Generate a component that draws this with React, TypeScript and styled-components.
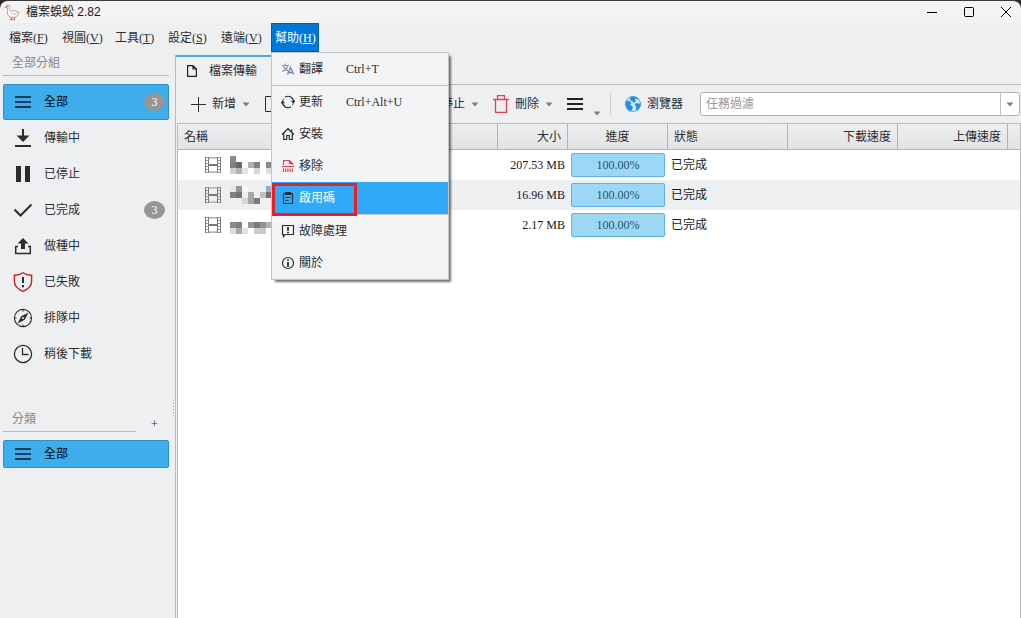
import React from "react";
import styled, { createGlobalStyle, css } from "styled-components";

const ui = '"Liberation Serif", "Noto Sans CJK TC", serif';

const GlobalStyle = createGlobalStyle`
  *, *::before, *::after { box-sizing: border-box; }
  body {
    margin: 0;
    background: #2f2b2c;
    color: #2b2d2f;
    font-family: ${ui};
    font-size: 12px;
    line-height: 16px;
  }
  button, input { font: inherit; color: inherit; }
  button { margin: 0; padding: 0; border: 0; background: none; text-align: left; white-space: nowrap; }
  ul { margin: 0; padding: 0; list-style: none; }
  svg { display: block; flex: none; }
`;

const Window = styled.div`
  display: flex;
  flex-direction: column;
  min-height: 100vh;
`;

const TitleBar = styled.header`
  display: flex;
  align-items: center;
  height: 23px;
  padding-left: 4px;
  border-top: 1px solid #3d393a;
  border-radius: 8px 8px 0 0;
  background: #f3f3f3;
`;

const Title = styled.h1`
  flex: 1;
  margin: 0 0 0 6px;
  font: 400 12px/20px "Liberation Sans", "Noto Sans CJK TC", sans-serif;
  color: #1a1a1a;
`;

const WindowControls = styled.div`
  display: flex;
  gap: 7px;
`;

const WindowButton = styled.button`
  display: flex;
  align-items: center;
  justify-content: center;
  width: 30px;
  height: 22px;
`;

const MenuBar = styled.nav`
  display: flex;
  gap: 5px;
  height: 29px;
  padding-left: 6px;
  background: #eeeff1;
`;

const MenuSlot = styled.div`
  position: relative;
`;

const MenuTitle = styled.button<{ $open?: boolean }>`
  width: 48px;
  height: 29px;
  padding-left: 3px;
  ${(p) =>
    p.$open &&
    css`
      border: 1px solid #005ba8;
      background: #0078d7;
      color: #fff;
    `}
`;

const Menu = styled.ul`
  position: absolute;
  z-index: 10;
  top: 29px;
  left: 0;
  width: 178px;
  border: 1px solid #c2c4c6;
  background: #f3f4f6;
  box-shadow: 3px 3px 2px -1px rgba(0, 0, 0, 0.55);
`;

const MenuRow = styled.li<{ $divided?: boolean }>`
  position: relative;
  ${(p) => p.$divided && "border-bottom: 1px solid #c2c4c6;"}
`;

const MenuItem = styled.button<{ $active?: boolean }>`
  display: flex;
  align-items: center;
  width: 100%;
  height: 32px;
  padding-left: 9px;
  background: ${(p) => (p.$active ? "#2fa9f8" : "transparent")};
`;

const MenuLabel = styled.span<{ $active?: boolean }>`
  min-width: 47px;
  margin-left: 4px;
  color: ${(p) => (p.$active ? "#fff" : "inherit")};
`;

const Marker = styled.span`
  position: absolute;
  top: 1px;
  left: 0;
  width: 85px;
  height: 33px;
  border: 3px solid #ee1c25;
  pointer-events: none;
`;

const Body = styled.div`
  display: flex;
  flex: 1;
  background: #eeeff1;
`;

const Sidebar = styled.aside`
  position: relative;
  flex: none;
  width: 175px;
  padding: 0 6px 0 3px;
`;

const GroupHeader = styled.div`
  display: flex;
  align-items: flex-end;
  margin-bottom: 8px;
`;

const GroupTitle = styled.h2`
  flex: 1;
  height: 24px;
  margin: 0;
  padding-left: 9px;
  border-bottom: 1px solid #b9bbbd;
  font-size: 12px;
  font-weight: 400;
  line-height: 22px;
  color: #85878a;
`;

const AddCategory = styled.button`
  width: 33px;
  height: 16px;
  padding-left: 4px;
  text-align: center;
`;

const GroupList = styled.ul`
  margin-bottom: 36px;
`;

const GroupItem = styled.button<{ $selected?: boolean; $compact?: boolean }>`
  display: flex;
  align-items: center;
  width: 100%;
  height: ${(p) => (p.$compact ? 28 : 36)}px;
  padding: 0 3px 0 9px;
  border: 1px solid ${(p) => (p.$selected ? "#2f8fc4" : "transparent")};
  border-radius: 2px;
  background: ${(p) => (p.$selected ? "#3daeeb" : "transparent")};
  color: ${(p) => (p.$selected ? "#000" : "#2b2d2f")};
`;

const GroupName = styled.span`
  flex: 1;
  margin-left: 11px;
`;

const Badge = styled.span`
  width: 21px;
  height: 18px;
  border-radius: 50%;
  background: #969696;
  color: #fff;
  line-height: 18px;
  text-align: center;
`;

const SplitGrip = styled.span`
  position: absolute;
  top: 348px;
  right: 1px;
  width: 1px;
  height: 16px;
  background: repeating-linear-gradient(#a2a4a6 0 1px, transparent 1px 3px);
`;

const Main = styled.main`
  display: flex;
  flex: 1;
  flex-direction: column;
  min-width: 0;
  margin-top: 3px;
  border-left: 1px solid #b9bbbd;
`;

const TabStrip = styled.div`
  display: flex;
  height: 30px;
  border-bottom: 1px solid #b9bbbd;
`;

const Tab = styled.button`
  display: flex;
  align-items: center;
  gap: 12px;
  height: 30px;
  padding: 0 14px 0 11px;
  border-top: 2px solid #46abdf;
  border-right: 1px solid #b9bbbd;
  background: #eeeff1;
`;

const Toolbar = styled.div`
  display: flex;
  align-items: center;
  height: 38px;
  padding-left: 14px;
`;

const CreateTools = styled.div`
  display: flex;
  align-items: center;
  gap: 14px;
  width: 229px;
`;

const Tool = styled.button`
  display: flex;
  align-items: center;
  gap: 6px;
  margin-right: 14px;
`;

const CreateTool = styled(Tool)`
  margin-right: 0;
`;

const OverflowTool = styled(Tool)`
  gap: 10px;
  height: 24px;
  margin-right: 9px;

  svg:last-child {
    align-self: flex-end;
  }
`;

const ToolDivider = styled.span`
  width: 1px;
  height: 22px;
  margin-right: 14px;
  background: #c9cbcd;
`;

const FilterBox = styled.div`
  display: flex;
  flex: 1;
  height: 24px;
  margin: 0 1px 0 3px;
  border: 1px solid #b3b5b7;
  border-radius: 3px;
  background: #fff;
`;

const FilterInput = styled.input`
  flex: 1;
  min-width: 0;
  padding: 0 5px;
  border: 0;
  outline: 0;
  background: transparent;

  &::placeholder {
    color: #97999b;
    opacity: 1;
  }
`;

const FilterToggle = styled.button`
  display: flex;
  align-items: center;
  justify-content: center;
  width: 19px;
  border-left: 1px solid #c0c2c4;
`;

const TableFrame = styled.section`
  flex: 1;
  margin: 0 0 0 1px;
  border: solid #b9bbbd;
  border-width: 1px 1px 0;
  background: #fff;
`;

const TaskTable = styled.table`
  width: 100%;
  table-layout: fixed;
  border-collapse: separate;
  border-spacing: 0;
`;

type Align = "left" | "center" | "right";

const HeadCell = styled.th<{ $align?: Align }>`
  height: 26px;
  padding: 0 6px;
  border-right: 1px solid #b0b2b4;
  border-bottom: 1px solid #b0b2b4;
  background: linear-gradient(#edeef0, #e1e3e5);
  font-weight: 400;
  text-align: ${(p) => p.$align ?? "left"};

  &:last-child {
    border-right: 0;
    padding: 0;
  }
`;

const TaskRow = styled.tr`
  &:nth-child(even) {
    background: #eeeff1;
  }
`;

const Cell = styled.td<{ $align?: Align }>`
  height: 30px;
  padding: 0 3px;
  color: #17191b;
  text-align: ${(p) => p.$align ?? "left"};
`;

const NameCell = styled.div`
  display: flex;
  align-items: center;
  gap: 9px;
  padding-left: 24px;
`;

const Progress = styled.div`
  height: 24px;
  border: 1px solid #62b3e4;
  border-radius: 2px;
  background: #9cd8f5;
  color: #1c516e;
  line-height: 22px;
  text-align: center;
`;

const Caret = () => (
  <svg width="8" height="5" viewBox="0 0 8 5" aria-hidden="true">
    <path d="M0.5 0.5h7L4 4.5z" fill="#7c7e80" />
  </svg>
);

const Bars = () => (
  <svg width="16" height="14" viewBox="0 0 16 14" aria-hidden="true">
    <path d="M0 2h16M0 7h16M0 12h16" stroke="#202223" strokeWidth="2" />
  </svg>
);

const Icon20 = ({ children }: { children: React.ReactNode }) => (
  <svg width="20" height="20" viewBox="0 0 20 20" fill="none" stroke="#2a2c2d" aria-hidden="true">
    {children}
  </svg>
);

const Icon14 = ({ children, color = "#2a2c2d" }: { children: React.ReactNode; color?: string }) => (
  <svg width="14" height="14" viewBox="0 0 14 14" fill="none" stroke={color} aria-hidden="true">
    {children}
  </svg>
);

const Goose = () => (
  <svg width="16" height="17" viewBox="0 0 16 17" aria-hidden="true">
    <path
      d="M2 2.6C2.200 1.200 3.200.7 4.200.9c1.300.3 1.700 1.500 1.400 2.900-.3 1.600-.2 2.600.9 3.100 1.300.4 3-.5 4.700-.2 1.500.3 2.300 1.300 4 1.600-.3 1.300-1.300 1.700-1.500 2.600-.4 1.600-2.200 2.500-4.400 2.500-3.200 0-5.700-1.200-5.900-3.900C3.300 7.500 3.900 5.800 3.500 4z"
      fill="#fbf6f2"
      stroke="#a8938b"
      strokeWidth=".8"
    />
    <path d="M2.600 2L.2 3.500l2.900.7z" fill="#e07a50" />
    <path d="M7.500 9c1.400 1.600 4 1.500 6-.3" fill="none" stroke="#b7a59d" strokeWidth=".8" />
    <path d="M7.500 13.200l.3 2.600H5.500M10 13.200l.5 2.600H8.600" fill="none" stroke="#d2704c" strokeWidth="1.100" />
    <circle cx="3.900" cy="2.400" r=".5" fill="#333" />
  </svg>
);

const groupIcons = {
  all: (
    <Icon20>
      <path d="M2 5h16M2 10h16M2 15h16" stroke="#1b3b58" strokeWidth="2" />
    </Icon20>
  ),
  transferring: (
    <Icon20>
      <path d="M10 1v9M2 18h16" strokeWidth="2" />
      <path d="M3.500 7.500h13L10 14z" fill="#2a2c2d" stroke="none" />
    </Icon20>
  ),
  stopped: (
    <Icon20>
      <path d="M3 2h5v16H3zM12 2h5v16h-5z" fill="#2a2c2d" stroke="none" />
    </Icon20>
  ),
  done: (
    <Icon20>
      <path d="M1.500 9.500l6 6L18.500 4.500" strokeWidth="2" />
    </Icon20>
  ),
  seeding: (
    <Icon20>
      <path d="M5 10.500H2.700v7h14.600v-7H15" strokeWidth="1.500" />
      <path d="M10 2l5.500 5.500h-3.500V13H8V7.500H4.500z" fill="#2a2c2d" stroke="none" />
    </Icon20>
  ),
  failed: (
    <Icon20>
      <path d="M10 .8c2.500 1.800 5.500 2.500 8.600 2.500v6c0 4.800-3.500 8-8.600 10-5.100-2-8.600-5.200-8.600-10v-6C4.500 3.300 7.500 2.600 10 .8z" stroke="#c81e1e" strokeWidth="1.400" />
      <path d="M10 5v6M10 13v2.200" strokeWidth="2" />
    </Icon20>
  ),
  queued: (
    <Icon20>
      <circle cx="10" cy="10" r="8.600" strokeWidth="1.100" />
      <path d="M10 1.500v2M10 16.500v2M1.500 10h2M16.500 10h2" />
      <path d="M15.500 4.500l-3.800 7.200L4.500 15.500l3.800-7.200z" fill="#2a2c2d" stroke="none" />
      <circle cx="10" cy="10" r="1" fill="#eeeff1" stroke="none" />
    </Icon20>
  ),
  later: (
    <Icon20>
      <circle cx="10" cy="10" r="8.600" strokeWidth="1.300" />
      <path d="M9.500 4v6.500h6" strokeWidth="1.300" />
    </Icon20>
  ),
};

const menuIcons = {
  translate: (
    <Icon14 color="#8a93bd">
      <path d="M1 3.500h7M4.500 1.500v2M2.500 4c.7 2.500 2.500 4 4.500 5M6.700 4C6 6.500 3.500 8.500 1.200 9.500" strokeWidth="1.200" />
      <path d="M6.500 12.500l3-7L12.800 12.500M7.500 10.500h4" stroke="#7480b4" strokeWidth="1.300" />
    </Icon14>
  ),
  update: (
    <Icon14>
      <path d="M4 2.200A5.500 5.500 0 0 1 12.500 7M10 11.700A5.500 5.500 0 0 1 1.500 7" strokeWidth="1.200" />
      <path d="M1.600 7A5.500 5.500 0 0 1 2.800 3.600M12.400 7a5.500 5.500 0 0 1-1.200 3.400" strokeWidth="1.200" opacity=".6" />
      <path d="M10.500 5.800l2 1.900 1.300-2.300M3.500 8.200l-2-1.900L.2 8.600" strokeWidth="1.100" />
    </Icon14>
  ),
  install: (
    <Icon14>
      <path d="M1 7.500L7 1.700l6 5.800M2.700 6.500v6h3v-4h2.600v4h3v-6M10.700 5V2.500" strokeWidth="1.200" />
    </Icon14>
  ),
  remove: (
    <Icon14 color="#da4453">
      <path d="M2.500 6V1.500h6L11.500 4.500V6M8.500 1.500v3h3M1 7.500h12M2.500 9.500V13M4.700 9.500V13M6.900 9.500V13M9.100 9.500V13M11.300 9.500V13" strokeWidth="1.200" />
    </Icon14>
  ),
  activate: (
    <Icon14>
      <path d="M2.500 2.500h9v10h-9zM4.500 6.500h5M4.500 9.500h3" strokeWidth="1.200" />
      <path d="M4 1h6v3H4z" fill="#2a2c2d" stroke="none" />
    </Icon14>
  ),
  troubleshoot: (
    <Icon14>
      <path d="M1.500 1.500h11v9H4.300l-1.800 2v-2h-1z" strokeWidth="1.200" />
      <path d="M7 3v3.800M7 7.800v1.400" strokeWidth="1.800" />
    </Icon14>
  ),
  about: (
    <Icon14>
      <circle cx="7" cy="7" r="5.500" strokeWidth="1.200" />
      <path d="M7 3.300v1.500M7 6v5" strokeWidth="1.800" />
    </Icon14>
  ),
};

const Film = () => (
  <svg width="16" height="16" viewBox="0 0 16 16" fill="none" shapeRendering="crispEdges" aria-hidden="true">
    <path d="M3 .5h10M3 15.500h10" stroke="#b4b6b8" />
    <path d="M3 1.500h10M3 14.500h10" stroke="#c9cbcd" />
    <path d="M3 8h10" stroke="#77797b" strokeWidth="2" />
    <path d="M.5 0v16M3.500 0v16M12.500 0v16M15.500 0v16" stroke="#77797b" />
    <path d="M2 0v16M14 0v16" stroke="#9a9c9e" strokeWidth="2" strokeDasharray="1 2" />
  </svg>
);

const Mosaic = ({ cells }: { cells: string[][] }) => (
  <svg width="42" height="18" viewBox="0 0 42 18" shapeRendering="crispEdges" aria-hidden="true">
    {cells.map((row, y) =>
      row.map((fill, x) => (fill ? <rect key={`${x}-${y}`} x={x * 6} y={y * 6} width="6" height="6" fill={fill} /> : null))
    )}
  </svg>
);

const menus = [
  ["檔案", "F"],
  ["視圖", "V"],
  ["工具", "T"],
  ["設定", "S"],
  ["遠端", "V"],
];

type HelpItem = { icon: keyof typeof menuIcons; label: string; keys?: string; divided?: boolean; active?: boolean };

const helpItems: HelpItem[] = [
  { icon: "translate", label: "翻譯", keys: "Ctrl+T", divided: true },
  { icon: "update", label: "更新", keys: "Ctrl+Alt+U" },
  { icon: "install", label: "安裝" },
  { icon: "remove", label: "移除" },
  { icon: "activate", label: "啟用碼", divided: true, active: true },
  { icon: "troubleshoot", label: "故障處理" },
  { icon: "about", label: "關於" },
];

type Group = { icon: keyof typeof groupIcons; name: string; count?: number; selected?: boolean };

const groups: Group[] = [
  { icon: "all", name: "全部", count: 3, selected: true },
  { icon: "transferring", name: "傳輸中" },
  { icon: "stopped", name: "已停止" },
  { icon: "done", name: "已完成", count: 3 },
  { icon: "seeding", name: "做種中" },
  { icon: "failed", name: "已失敗" },
  { icon: "queued", name: "排隊中" },
  { icon: "later", name: "稍後下載" },
];

const tasks = [
  {
    size: "207.53 MB",
    cells: [
      ["#8c8c8c"],
      ["#808080", "#686868", "", "#b0b0b0", "#828282", "", "#8a8a8a"],
      ["#d0d0d0", "#b2b2b2", "#e4e4e4", "", "#d8d8d8", "", "#dcdcdc"],
    ],
  },
  {
    size: "16.96 MB",
    cells: [
      ["#e6e6e6", "#969696", "#f8f8f8", "", "", "", "#8db4cf"],
      ["#808080", "#747474", "", "#a8a8a8", "", "#c0c0c0", "#707070"],
      ["", "", "#d6d6d6", "#a6a6a6", "#7c7c7c"],
    ],
  },
  {
    size: "2.17 MB",
    cells: [
      [],
      ["#8a8a8a", "#808080", "", "#969696", "#7a7a7a", "#929292", "#b4b4b4"],
      ["#dcdcdc", "#a8a8a8", "#e2e2e2", "", "#cccccc", "#c8c8c8"],
    ],
  },
];

export default function App() {
  return (
    <>
      <GlobalStyle />
      <Window>
        <TitleBar>
          <Goose />
          <Title>檔案蜈蚣 2.82</Title>
          <WindowControls>
            <WindowButton aria-label="最小化">
              <svg width="10" height="10" viewBox="0 0 10 10"><path d="M0 5.500h10" stroke="#000" /></svg>
            </WindowButton>
            <WindowButton aria-label="最大化">
              <svg width="10" height="10" viewBox="0 0 10 10"><rect x=".5" y=".5" width="9" height="9" rx="1" fill="none" stroke="#000" /></svg>
            </WindowButton>
            <WindowButton aria-label="關閉">
              <svg width="10" height="10" viewBox="0 0 10 10"><path d="M0 0l10 10M10 0L0 10" stroke="#000" /></svg>
            </WindowButton>
          </WindowControls>
        </TitleBar>

        <MenuBar>
          {menus.map(([name, key]) => (
            <MenuTitle key={name}>
              {name}(<u>{key}</u>)
            </MenuTitle>
          ))}
          <MenuSlot>
            <MenuTitle $open aria-expanded="true">
              幫助(<u>H</u>)
            </MenuTitle>
            <Menu>
              {helpItems.map((item) => (
                <MenuRow key={item.label} $divided={item.divided}>
                  <MenuItem $active={item.active}>
                    {menuIcons[item.icon]}
                    <MenuLabel $active={item.active}>{item.label}</MenuLabel>
                    {item.keys && <span>{item.keys}</span>}
                  </MenuItem>
                  {item.active && <Marker />}
                </MenuRow>
              ))}
            </Menu>
          </MenuSlot>
        </MenuBar>

        <Body>
          <Sidebar>
            <GroupHeader>
              <GroupTitle>全部分組</GroupTitle>
            </GroupHeader>
            <GroupList>
              {groups.map((group) => (
                <li key={group.name}>
                  <GroupItem $selected={group.selected}>
                    {groupIcons[group.icon]}
                    <GroupName>{group.name}</GroupName>
                    {group.count && <Badge>{group.count}</Badge>}
                  </GroupItem>
                </li>
              ))}
            </GroupList>
            <GroupHeader>
              <GroupTitle>分類</GroupTitle>
              <AddCategory aria-label="新增分類">+</AddCategory>
            </GroupHeader>
            <GroupItem $selected $compact>
              {groupIcons.all}
              <GroupName>全部</GroupName>
            </GroupItem>
            <SplitGrip />
          </Sidebar>

          <Main>
            <TabStrip>
              <Tab>
                <svg width="10" height="12" viewBox="0 0 10 12" fill="none" stroke="#202223" strokeWidth="1.200" aria-hidden="true">
                  <path d="M.6.600h5.400l3.400 3.400v7.400H.6zM6 .6v3.400h3.400" />
                </svg>
                檔案傳輸
              </Tab>
            </TabStrip>

            <Toolbar>
              <CreateTools>
                <CreateTool>
                  <svg width="16" height="16" viewBox="0 0 16 16" aria-hidden="true">
                    <path d="M8.500 1v15M1 8.500h15" stroke="#2a2c2d" />
                  </svg>
                  新增
                  <Caret />
                </CreateTool>
                <CreateTool aria-label="新增檔案">
                  <svg width="14" height="16" viewBox="0 0 14 16" fill="none" stroke="#2a2c2d" aria-hidden="true">
                    <path d="M1.500.500h8l4 4v11h-12z" />
                  </svg>
                </CreateTool>
              </CreateTools>
              <Tool>
                <svg width="16" height="16" viewBox="0 0 16 16" aria-hidden="true">
                  <path d="M2 2h12v12H2z" fill="#2a2c2d" />
                </svg>
                停止
                <Caret />
              </Tool>
              <Tool>
                <svg width="16" height="18" viewBox="0 0 16 18" fill="none" stroke="#da4453" aria-hidden="true">
                  <path d="M0 4.500h16M4.500 4V.700h7V4M2.500 5v12.300h11V5" strokeWidth="1.300" />
                </svg>
                刪除
                <Caret />
              </Tool>
              <OverflowTool aria-label="更多">
                <Bars />
                <Caret />
              </OverflowTool>
              <ToolDivider />
              <Tool>
                <svg width="16" height="16" viewBox="0 0 16 16" aria-hidden="true">
                  <circle cx="8" cy="8" r="7.900" fill="#c9e6f8" />
                  <path
                    d="M5.500.5C8.500-.4 12 .7 14 3l-1.500.5-1.700-.7-1 1L11 5 9.800 6.200 8.300 7 8 5.500 6.500 5 5 3.500zM.4 6L2 4.500l3 1L6.500 7 5 8.500l1.500 1.200L8 11l-1 2.500L5.800 15.600C2.500 14.500 0 11.500.4 6zM10 8l2-1 2 .7 1.900-.7c.2 3-1.400 6.200-4.400 7.800l-.7-2.300.7-1.500L10 9.800z"
                    fill="#2390dc"
                  />
                  <circle cx="8" cy="8" r="7.500" fill="none" stroke="#4aa6e2" strokeWidth=".9" />
                </svg>
                瀏覽器
              </Tool>
              <FilterBox>
                <FilterInput type="text" placeholder="任務過濾" aria-label="任務過濾" />
                <FilterToggle aria-label="過濾選項">
                  <Caret />
                </FilterToggle>
              </FilterBox>
            </Toolbar>

            <TableFrame>
              <TaskTable>
                <colgroup>
                  <col />
                  <col width="70" />
                  <col width="100" />
                  <col width="120" />
                  <col width="110" />
                  <col width="110" />
                  <col width="12" />
                </colgroup>
                <thead>
                  <tr>
                    <HeadCell>名稱</HeadCell>
                    <HeadCell $align="right">大小</HeadCell>
                    <HeadCell $align="center">進度</HeadCell>
                    <HeadCell>狀態</HeadCell>
                    <HeadCell $align="right">下載速度</HeadCell>
                    <HeadCell $align="right">上傳速度</HeadCell>
                    <HeadCell as="td" />
                  </tr>
                </thead>
                <tbody>
                  {tasks.map((task) => (
                    <TaskRow key={task.size}>
                      <Cell>
                        <NameCell>
                          <Film />
                          <Mosaic cells={task.cells} />
                        </NameCell>
                      </Cell>
                      <Cell $align="right">{task.size}</Cell>
                      <Cell>
                        <Progress>100.00%</Progress>
                      </Cell>
                      <Cell>已完成</Cell>
                      <Cell />
                      <Cell />
                      <Cell />
                    </TaskRow>
                  ))}
                </tbody>
              </TaskTable>
            </TableFrame>
          </Main>
        </Body>
      </Window>
    </>
  );
}
